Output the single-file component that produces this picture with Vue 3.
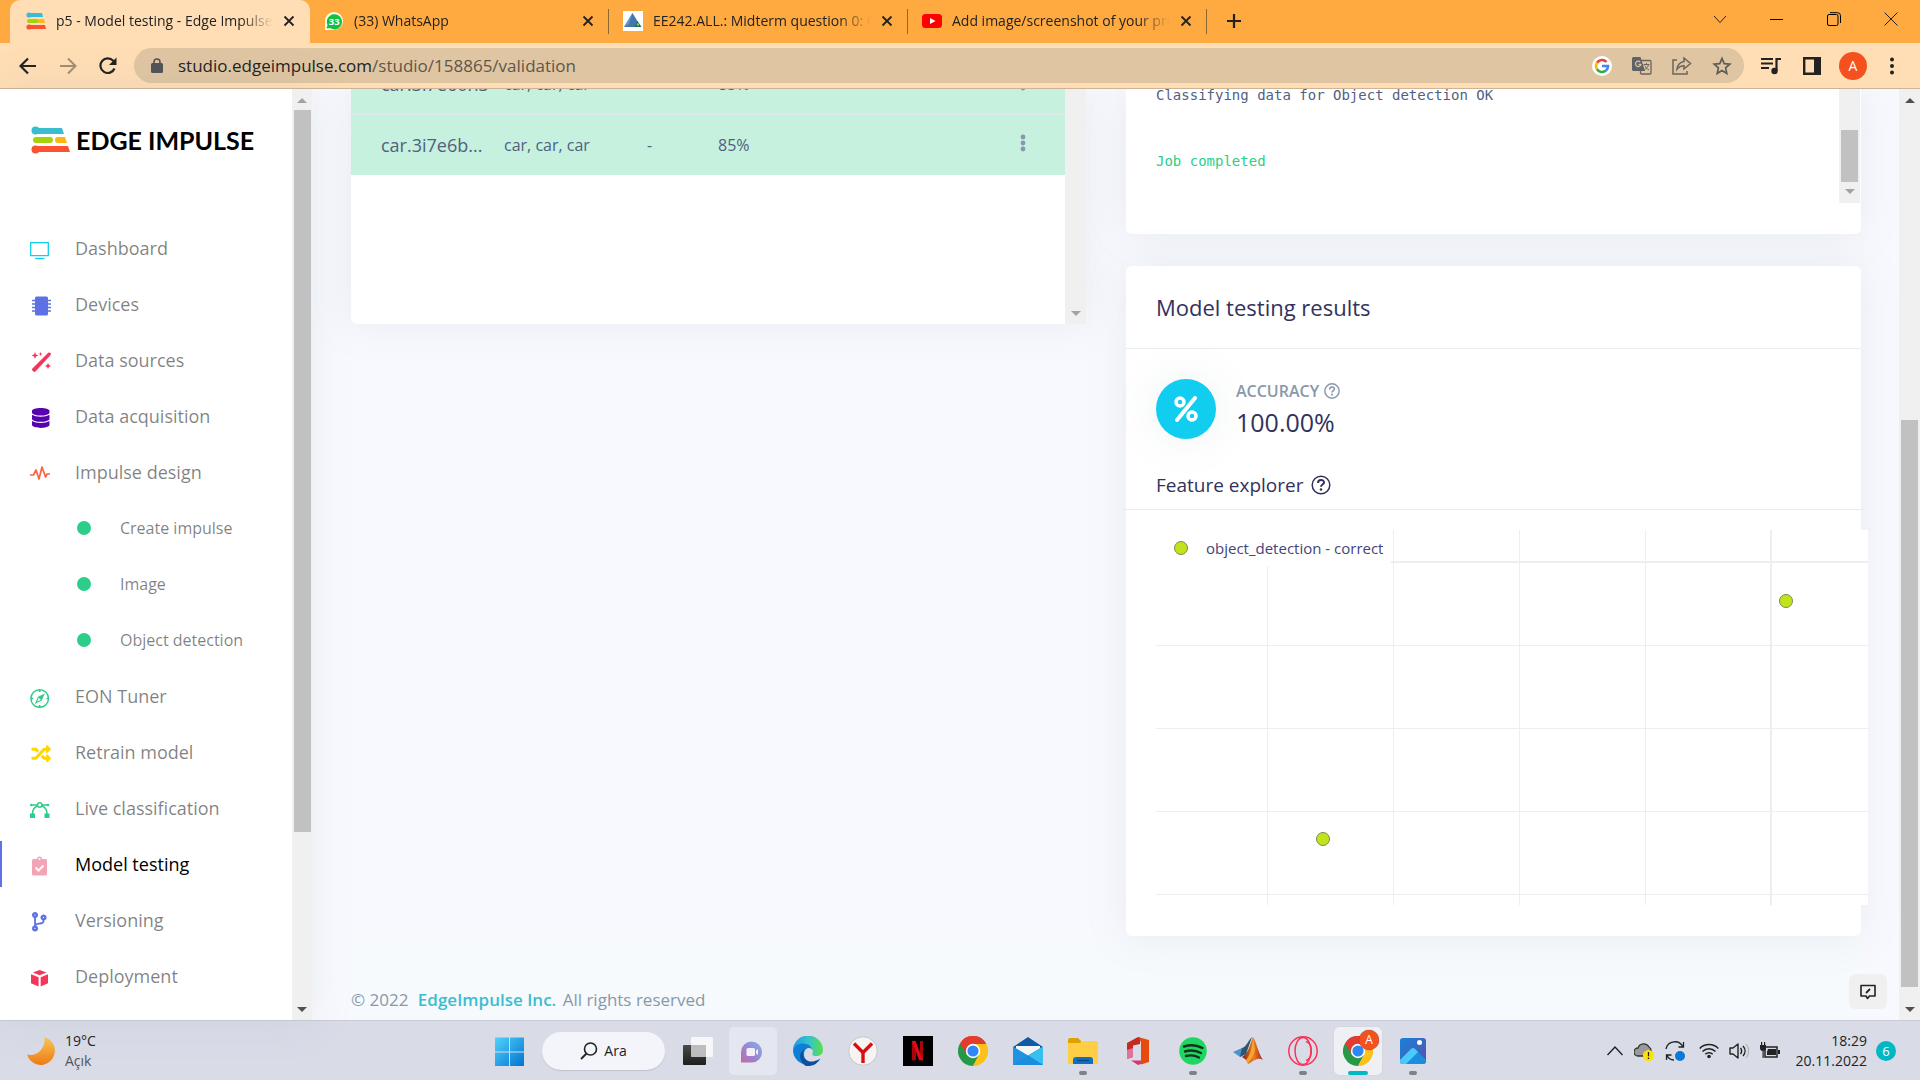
<script setup>
const stripes = `<path d="M3 2h13l1 4H3z" fill="#3bbdd0"/><circle cx="3" cy="4" r="2.6" fill="#3bbdd0"/><path d="M3 8h8a2 2 0 0 1 0 4H3a2 2 0 0 1 0-4z" fill="#a4d20b"/><path d="M14 8h4l1 4h-5a2 2 0 0 1 0-4z" fill="#fdb614"/><path d="M3 14h16l1 4H3z" fill="#fb5330"/><circle cx="3" cy="16" r="2.6" fill="#fb5330"/>`

const tabs = [
  { title: 'p5 - Model testing - Edge Impulse', active: true, icon: stripes },
  { title: '(33) WhatsApp', icon: `<path d="M1 19V10a9 9 0 1 1 9 9z" fill="#f3ffe9"/><path d="M2.500 17.500l1-3.500A7.600 7.600 0 1 1 6 17z" fill="#10c143"/><text x="10.200" y="13.600" font-size="9.500" font-weight="700" text-anchor="middle" fill="#fff" font-family="Open Sans, sans-serif">33</text>` },
  { title: 'EE242.ALL.: Midterm question 0: Quiz', icon: `<path d="M0 0h20v20H0z" fill="#fff"/><path d="M9.500 2l8.500 14H1z" fill="#4478ad"/><path d="M9.500 2L1 16l5-3z" fill="#5f9acb"/><path d="M14.500 10l4 6h-7z" fill="#16725f"/><circle cx="15" cy="13.500" r="1.200" fill="#8bd24a"/>` },
  { title: 'Add image/screenshot of your project', icon: `<rect y="3" width="20" height="14" rx="3.500" fill="#f00"/><path d="M8 7v6l5.500-3z" fill="#fff"/>` }
]

const wave = '<path d="M0 11h3.500l2.500-5 3 9L12 3l3.500 10 1.500-3h3" fill="none" stroke="#fb6340" stroke-width="1.700" stroke-linejoin="round"/>'
const nav = [
  { label: 'Dashboard', icon: '<g fill="none" stroke="#11cdef" stroke-width="1.300"><path d="M.700 2.700h17.600v13H.700z"/><path d="M5 18.500h9.500"/></g>' },
  { label: 'Devices', icon: '<rect x="5" y=".500" width="13" height="19" rx="1.500" fill="#5e72e4"/><path d="M2 4.500h19M2 8h19M2 11.500h19M2 15h19" stroke="#5e72e4" stroke-width="1.500"/>' },
  { label: 'Data sources', icon: '<path d="M3.500 19.500l-1.300-1.300a1 1 0 0 1 0-1.400L18.500.500 21 1 20.500 3.300 5.500 19.500a1.400 1.400 0 0 1-2 0z" fill="#f5365c"/><path d="M5 0l1 2.500 2.500 1-2.500 1L5 7 4 4.500l-2.500-1L4 2.500zM10.500 0l.600 1.400 1.400.600-1.400.600-.600 1.400-.600-1.400L8.500 2l1.400-.600zM18 11l1 2 2 1-2 1-1 2-1-2-2-1 2-1z" fill="#f5365c"/>' },
  { label: 'Data acquisition', icon: '<path transform="translate(2 0) scale(.039)" d="M448 73.143v45.714C448 159.143 347.667 192 224 192S0 159.143 0 118.857V73.143C0 32.857 100.333 0 224 0s224 32.857 224 73.143zM448 176v102.857C448 319.143 347.667 352 224 352S0 319.143 0 278.857V176c48.125 33.143 136.208 48.572 224 48.572S399.874 209.143 448 176zm0 160v102.857C448 479.143 347.667 512 224 512S0 479.143 0 438.857V336c48.125 33.143 136.208 48.572 224 48.572S399.874 369.143 448 336z" fill="#5603ad"/>' },
  { label: 'Impulse design', icon: wave },
  { label: 'Create impulse', sub: true },
  { label: 'Image', sub: true },
  { label: 'Object detection', sub: true },
  { label: 'EON Tuner', icon: '<circle cx="9.700" cy="10.500" r="8.800" fill="none" stroke="#2dce89" stroke-width="1.500"/><path d="M9.700 2v2M9.700 17v2M1 10.500h2M16.500 10.500h2" stroke="#2dce89" stroke-width="1.500"/><path d="M14.800 5.500l-3 7-7 3.500 3.200-7.200zM8.700 9.700l-1.500 4 3.700-2z" fill="#2dce89" fill-rule="evenodd"/>' },
  { label: 'Retrain model', icon: '<path transform="translate(1.500 0) scale(.038)" d="M504.971 359.029c9.373 9.373 9.373 24.569 0 33.941l-80 79.984c-15.010 15.010-40.971 4.490-40.971-16.971V416h-58.785a12.004 12.004 0 0 1-8.773-3.812l-70.556-75.596 53.333-57.143L352 336h32v-39.981c0-21.438 25.943-31.998 40.971-16.971l80 79.981zM12 176h84l52.781 56.551 53.333-57.143-70.556-75.596A11.999 11.999 0 0 0 122.785 96H12c-6.627 0-12 5.373-12 12v56c0 6.627 5.373 12 12 12zm372 0v39.984c0 21.460 25.961 31.980 40.971 16.971l80-79.984c9.373-9.373 9.373-24.569 0-33.941l-80-79.981C409.943 24.021 384 34.582 384 56.019V96h-58.785a12.004 12.004 0 0 0-8.773 3.812L96 336H12c-6.627 0-12 5.373-12 12v56c0 6.627 5.373 12 12 12h110.785c3.326 0 6.503-1.381 8.773-3.812L352 176h32z" fill="#ffd600"/>' },
  { label: 'Live classification', icon: '<g fill="none" stroke="#2dce89" stroke-width="1.500"><circle cx="9.700" cy="5" r="2.200"/><path d="M7.500 5H1.500M12 5h6M2.500 14c0-4 2-7 5.200-8M17 14c0-4-2-7-5.200-8"/></g><path d="M0 13.500h5v4.500H0zM14.500 13.500h5v4.500h-5z" fill="#2dce89"/><circle cx="1.300" cy="5" r="1.300" fill="#2dce89"/><circle cx="18" cy="5" r="1.300" fill="#2dce89"/>' },
  { label: 'Model testing', active: true, icon: '<path d="M3.500 3H7a2.500 2.500 0 0 1 5 0h3.500A1.500 1.500 0 0 1 17 4.500V18a1.500 1.500 0 0 1-1.500 1.500h-12A1.500 1.500 0 0 1 2 18V4.500A1.500 1.500 0 0 1 3.500 3z" fill="#f3a4b5"/><circle cx="9.500" cy="3" r="1" fill="#fff"/><path d="M5.500 11.500l3 3 5-5" fill="none" stroke="#fff" stroke-width="2"/>' },
  { label: 'Versioning', icon: '<path transform="translate(2 0) scale(.038)" d="M384 144c0-44.200-35.800-80-80-80s-80 35.800-80 80c0 36.400 24.300 67.100 57.500 76.800-.6 16.100-4.200 28.500-11 36.900-15.400 19.200-49.300 22.400-85.200 25.700-28.200 2.600-57.400 5.400-81.300 16.900v-144c32.500-10.200 56-40.500 56-76.300 0-44.200-35.800-80-80-80S0 35.800 0 80c0 35.800 23.500 66.100 56 76.300v199.300C23.500 365.900 0 396.200 0 432c0 44.200 35.800 80 80 80s80-35.800 80-80c0-34-21.200-63.100-51.200-74.600 3.100-5.200 7.800-9.800 14.900-13.400 16.200-8.200 40.400-10.400 66.100-12.800 42.200-3.900 90-8.400 118.200-43.400 14-17.400 21.100-39.800 21.600-67.900 31.600-10.800 54.400-40.700 54.400-75.900zM80 64c8.800 0 16 7.200 16 16s-7.200 16-16 16-16-7.200-16-16 7.200-16 16-16zm0 384c-8.800 0-16-7.200-16-16s7.200-16 16-16 16 7.200 16 16-7.200 16-16 16zm224-320c8.800 0 16 7.200 16 16s-7.200 16-16 16-16-7.200-16-16 7.200-16 16-16z" fill="#5e72e4"/>' },
  { label: 'Deployment', icon: '<path d="M9.700 2l6.800 2.600-6.800 2.700-6.800-2.700zM1 6.300l7.600 2.900v9.300L1 15.300zM18 6.300l-7.300 2.900v9.300L18 15.300z" fill="#f5365c"/>' }
]

const chrome = '<path d="M15 15L2 7.500A15 15 0 0 1 28 7.500z" fill="#e33b2e"/><path d="M15 15h13V7.500A15 15 0 0 1 15 30z" fill="#fcc21b"/><path d="M15 15l6.500 3.700L15 30A15 15 0 0 1 2 7.500z" fill="#279847"/><path d="M15 8h13.200A15 15 0 0 0 2 7.500L9 18.700z" fill="#e33b2e"/><path d="M15 8h13.200A15 15 0 0 1 15 30l6-11.500z" fill="#fcc21b"/><circle cx="15" cy="15" r="7.200" fill="#fff"/><circle cx="15" cy="15" r="5.600" fill="#3086f3"/>'
const apps = [
  { name: 'Task View', icon: '<defs><linearGradient id="tv" x2="0" y2="1"><stop stop-color="#4a4a48"/><stop offset="1" stop-color="#1e1e1c"/></linearGradient></defs><rect y="9" width="23" height="20" rx="1" fill="url(#tv)"/><rect x="8" y="1" width="22" height="20" rx="1" fill="#fff" fill-opacity=".78"/><path d="M8 9h15v12H8z" fill="#aaa" fill-opacity=".55"/>' },
  { name: 'Chat', lit: true, icon: '<defs><linearGradient id="ch" x1="1" x2="0" y2="1"><stop stop-color="#7fb4ec"/><stop offset=".550" stop-color="#9b84cf"/><stop offset="1" stop-color="#c06ba6"/></linearGradient></defs><path d="M3 26.500V16A10.500 10.500 0 1 1 14 26.500z" fill="url(#ch)"/><rect x="8.500" y="12" width="8.500" height="8" rx="1.500" fill="#f3effa"/><path d="M18 14.500l2-1.500v6l-2-1.500z" fill="#f3effa"/>' },
  { name: 'Edge', icon: '<defs><linearGradient id="eg" x2="1"><stop stop-color="#1b9de2"/><stop offset=".500" stop-color="#35c1d0"/><stop offset="1" stop-color="#5be048"/></linearGradient></defs><path d="M0 15A15 15 0 0 1 30 14c0 4-3 6-7 6-3 0-4-1-3.500-2.500C21 15 18 9 11 9 5 9 1 12 0 15z" fill="url(#eg)"/><path d="M0 15c1-5 5-7.500 10-7.500 6 0 9 4 9 6-3-3-8-1-8 5 0 5 5 9 11 8A14.500 14.500 0 0 1 0 15z" fill="#0f7ed5"/><path d="M12 13c-2 2-3 6 0 10 3 3 8 4 15.500-.500A15 15 0 0 1 13 30C7 27 4 17 12 13z" fill="#0d4f9e"/>' },
  { name: 'Yandex', icon: '<circle cx="15" cy="15" r="14.300" fill="#f5f4f2" stroke="#c6c5c8"/><path d="M6 7.500l9 9 9-9M15 15v12" fill="none" stroke="#d80f12" stroke-width="3.400"/>' },
  { name: 'Netflix', icon: '<path d="M0 0h30v30H0z"/><path d="M9 5h4v19l-4 .600zM17 5h3v19.600l-3-.600z" fill="#a9050f"/><path d="M9 5h3.500L20 24.600l-4-.600z" fill="#e50914"/>' },
  { name: 'Chrome', icon: chrome },
  { name: 'Mail', icon: '<path d="M0 11L15 1l15 10v7H0z" fill="#0f5ba6"/><path d="M3 10h24v8L15 22 3 18z" fill="#f4f5f8"/><path d="M0 10.500l15 9 15-9V29H0z" fill="#1f93e0"/><path d="M15 19.500l15-9V29z" fill="#36c0f0"/><path d="M0 29l15-9.500L30 29z" fill="#1a8ddd"/>' },
  { name: 'File Explorer', running: true, icon: '<path d="M0 4a2 2 0 0 1 2-2h8l3 3v6H0z" fill="#e0a100"/><path d="M0 7h12l3-2h13a2 2 0 0 1 2 2v20a1 1 0 0 1-1 1H1a1 1 0 0 1-1-1z" fill="#ffce45"/><path d="M5 28v-4a3 3 0 0 1 3-3h14a3 3 0 0 1 3 3v4z" fill="#1070c4"/><path d="M9 24.500h12" stroke="#0b4a8b" stroke-width="1.500"/>' },
  { name: 'Office', icon: '<path d="M4 7l11-6 2 .500V8L10 9.500V21l-6 2z" fill="#c22a22"/><path d="M4 14l6-2v9l-6 2z" fill="#e2729a"/><path d="M15 1l11 3v22l-8 2.500V6z" fill="#e64a0f"/><path d="M8 24.500h10V28l-3 1z" fill="#d5386a"/>' },
  { name: 'Spotify', running: true, icon: '<circle cx="15" cy="15" r="13.800" fill="#1ed760"/><path d="M6 10.500c6-2 13-1.500 18.500 1.500M7 15.500c5-1.500 11-1 16 1.500M8 20c4.500-1.200 9-.700 13 1.500" fill="none" stroke="#13301d" stroke-width="2.400" stroke-linecap="round"/>' },
  { name: 'MATLAB', icon: '<defs><linearGradient id="ml" x2="1"><stop stop-color="#7b1f1a"/><stop offset=".550" stop-color="#ef7d22"/><stop offset="1" stop-color="#a3251a"/></linearGradient></defs><path d="M0 16l9-4 5 4-7 5z" fill="#4c94cf"/><path d="M9 12c4-1 6-7 10-11l-6 17-6 3z" fill="#2f5570"/><path d="M20 1c3 4 6 18 10 23-5-3-8 0-15 4 0-3-3-5-6-7 6-3 8-12 11-20z" fill="url(#ml)"/><path d="M13 24c4-4 6-12 7-23l2 13c-2 7-4 10-7 14z" fill="#f6a52b"/>' },
  { name: 'Opera', running: true, icon: '<g fill="none" stroke="#fa3257" stroke-width="1.500"><circle cx="15" cy="15" r="14.200"/><ellipse cx="15" cy="15" rx="8" ry="13.500"/><path d="M18 5.500c7 2 7 17 0 19"/></g>' },
  { name: 'Chrome – A', running: true, active: true, icon: chrome },
  { name: 'Photos', running: true, icon: '<defs><linearGradient id="ph" x1="0" x2="1" y2="1"><stop stop-color="#1683d8"/><stop offset="1" stop-color="#5a4fb0"/></linearGradient></defs><rect x="2" y="2" width="26" height="26" rx="3" fill="url(#ph)"/><path d="M2 24l11-11a3 3 0 0 1 4 0l11 11v1a3 3 0 0 1-3 3H5a3 3 0 0 1-3-3z" fill="#1a8fe0"/><path d="M2 24l11-11a3 3 0 0 1 4 0l3 3L8 28H5a3 3 0 0 1-3-3z" fill="#4cc9fb"/><circle cx="21.500" cy="6.500" r="2.500" fill="#fff"/>' }
]

const rows = [
  { name: 'car.3i7e60n3', labels: 'car, car, car', anomaly: '-', score: '85%' },
  { name: 'car.3i7e6b...', labels: 'car, car, car', anomaly: '-', score: '85%' }
]
const points = [{ x: 630, y: 71 }, { x: 167, y: 309 }]
const gridX = [111, 237, 363, 489]
const gridY = [115, 198, 281, 364]
</script>

<template>
  <div class="screen">
    <header class="browser">
      <div class="tabstrip">
        <div class="tabs">
          <div v-for="t in tabs" :key="t.title" class="tab" :class="{ active: t.active }">
            <svg class="favicon" viewBox="0 0 20 20" v-html="t.icon"></svg>
            <span class="tab-title">{{ t.title }}</span>
            <button class="plain" aria-label="Close tab">
              <svg width="12" height="12" viewBox="0 0 12 12"><path d="M1.500 1.500l9 9M10.500 1.500l-9 9" stroke="#222" stroke-width="1.800" /></svg>
            </button>
          </div>
          <button class="plain new-tab" aria-label="New tab">
            <svg width="16" height="16" viewBox="0 0 16 16"><path d="M8 1v14M1 8h14" stroke="#222" stroke-width="2.200" /></svg>
          </button>
        </div>
        <div class="window-buttons">
          <button class="plain" aria-label="Search tabs"><svg width="14" height="14" viewBox="0 0 14 14"><path d="M1 4l6 6.500L13 4" fill="none" stroke="#222" /></svg></button>
          <button class="plain" aria-label="Minimize"><svg width="14" height="14" viewBox="0 0 14 14"><path d="M0 7.500h13" stroke="#000" /></svg></button>
          <button class="plain" aria-label="Restore"><svg width="14" height="14" viewBox="0 0 14 14"><g fill="none" stroke="#000"><rect x=".500" y="2.500" width="10.500" height="11" rx="1.500" /><path d="M3 .700h7.500a3 3 0 0 1 3 3V11" /></g></svg></button>
          <button class="plain" aria-label="Close window"><svg width="14" height="14" viewBox="0 0 14 14"><path d="M.500.500l13 13M13.500.500l-13 13" stroke="#222" /></svg></button>
        </div>
      </div>
      <div class="toolbar">
        <button class="plain" aria-label="Back"><svg width="18" height="18" viewBox="0 0 18 18"><path d="M17 9H2M9 1.500L1.500 9 9 16.500" fill="none" stroke="#222" stroke-width="2.200" /></svg></button>
        <button class="plain" aria-label="Forward"><svg width="18" height="18" viewBox="0 0 18 18"><path d="M1 9h15M9 1.500L16.500 9 9 16.500" fill="none" stroke="#a28c74" stroke-width="2" /></svg></button>
        <button class="plain" aria-label="Reload"><svg width="18" height="18" viewBox="0 0 18 18"><path d="M15.500 11.500a7.300 7.300 0 1 1-1.300-7.700l2 2" fill="none" stroke="#222" stroke-width="2.200" /><path d="M17.500.500V8H10z" fill="#222" /></svg></button>
        <div class="omnibox">
          <svg width="12" height="16" viewBox="0 0 12 16"><rect y="5" width="12" height="10" rx="1.500" fill="#505256" /><path d="M3 6V4a3 3 0 0 1 6 0v2" fill="none" stroke="#505256" stroke-width="1.600" /></svg>
          <a class="url" href="#"><span>studio.edgeimpulse.com</span>/studio/158865/validation</a>
          <button class="plain" aria-label="Google Lens"><svg width="20" height="20" viewBox="0 0 20 20"><circle cx="10" cy="10" r="10" fill="#fff" /><g fill="none" stroke-width="2.600"><path d="M14.500 6A6 6 0 0 0 5 6.800" stroke="#ea4335" /><path d="M5 6.800a6 6 0 0 0 0 6.400" stroke="#fbbc05" /><path d="M5 13.200a6 6 0 0 0 9 1.300" stroke="#34a853" /><path d="M14 14.500A6 6 0 0 0 16 10h-6" stroke="#4285f4" /></g></svg></button>
          <button class="plain" aria-label="Translate"><svg width="20" height="20" viewBox="0 0 20 20"><rect x="8.500" y="4.500" width="10.500" height="13.500" rx="1" fill="none" stroke="#6b655e" stroke-width="1.300" /><path d="M1.500 1h7l4.500 14H1.500A1.500 1.500 0 0 1 0 13.500v-11A1.500 1.500 0 0 1 1.500 1z" fill="#5f6368" /><path d="M8.200 6a2.700 2.700 0 1 0 .700 2.300H6.500" fill="none" stroke="#e0c5a1" stroke-width="1.200" /><path d="M11.500 8.500h6M14.500 7v1.500M16.500 8.500c-.500 2.500-2 4-4 5M13 9.500c.500 1.500 2 3.500 4 4.500" fill="none" stroke="#6b655e" /></svg></button>
          <button class="plain" aria-label="Share"><svg width="20" height="20" viewBox="0 0 20 20"><path d="M5 4H1v14h14v-3M12 2l6.500 5.500L12 13V9.700c-3 0-5 1-7 3.500.500-4 3-7 7-7.700z" fill="none" stroke="#6b655e" stroke-width="1.500" /></svg></button>
          <button class="plain" aria-label="Bookmark"><svg width="20" height="20" viewBox="0 0 20 20"><path d="M10 2.500l2.200 5.200 5.600.500-4.200 3.700 1.200 5.500L10 14.500l-4.800 2.900 1.200-5.500-4.200-3.700 5.600-.500z" fill="none" stroke="#5f5c58" stroke-width="1.700" /></svg></button>
        </div>
        <button class="plain" aria-label="Media"><svg width="20" height="20" viewBox="0 0 20 20"><path d="M0 3h12M0 7.500h12M0 12h8M15.500 15V3H20" fill="none" stroke="#222" stroke-width="2.200" /><circle cx="13.500" cy="15" r="3.200" fill="#222" /></svg></button>
        <button class="plain" aria-label="Side panel"><svg width="18" height="18" viewBox="0 0 18 18"><path d="M1.200 1.200h15.600v15.600H1.200z" fill="none" stroke="#222" stroke-width="2.400" /><path d="M11 1h6v16h-6z" fill="#222" /></svg></button>
        <button class="plain profile" aria-label="Profile">A</button>
        <button class="plain" aria-label="Menu"><svg width="6" height="18" viewBox="0 0 6 18"><g fill="#222"><circle cx="3" cy="2.500" r="2" /><circle cx="3" cy="9" r="2" /><circle cx="3" cy="15.500" r="2" /></g></svg></button>
      </div>
    </header>

    <div class="page">
      <aside class="sidebar">
        <div class="side-content">
          <a class="brand" href="#">
            <svg width="39" height="28" viewBox="0 0 39 28"><path d="M5 2h26l2 6H5z" fill="#3bbdd0" /><circle cx="4.500" cy="4.500" r="4" fill="#3bbdd0" /><rect x="2" y="11" width="20" height="6" rx="3" fill="#a4d20b" /><path d="M27 11h7l2 6h-9a3 3 0 0 1 0-6z" fill="#fdb614" /><path d="M5 20h32l2 6H5z" fill="#fb5330" /><circle cx="4.500" cy="23.500" r="4" fill="#fb5330" /></svg>
            <span>EDGE IMPULSE</span>
          </a>
          <nav>
            <a v-for="n in nav" :key="n.label" href="#" :class="{ sub: n.sub, current: n.active }">
              <i v-if="n.sub" class="dot"></i>
              <svg v-else width="22" height="20" viewBox="0 0 22 20" v-html="n.icon"></svg>
              <span>{{ n.label }}</span>
            </a>
          </nav>
        </div>
        <div class="scroll side-scroll"><i class="arrow up grey"></i><i class="thumb"></i><i class="arrow down"></i></div>
      </aside>

      <main>
        <div class="columns">
          <section class="card samples">
            <div class="table-wrap">
              <table>
                <tbody>
                  <tr v-for="r in rows" :key="r.name">
                    <td class="name">{{ r.name }}</td>
                    <td class="labels">{{ r.labels }}</td>
                    <td class="anomaly">{{ r.anomaly }}</td>
                    <td>{{ r.score }}</td>
                    <td class="more">
                      <button class="plain" aria-label="Sample options"><svg width="8" height="18" viewBox="0 0 8 18"><g fill="#8898aa"><circle cx="4" cy="3" r="2.400" /><circle cx="4" cy="9" r="2.400" /><circle cx="4" cy="15" r="2.400" /></g></svg></button>
                    </td>
                  </tr>
                </tbody>
              </table>
            </div>
            <div class="scroll"><i class="arrow down grey"></i></div>
          </section>

          <div class="right">
            <section class="card job">
              <pre>Classifying data for Object detection OK


<b>Job completed</b></pre>
              <div class="scroll job-scroll"><i class="thumb"></i><i class="arrow down grey"></i></div>
            </section>

            <section class="card results">
              <h2>Model testing results</h2>
              <div class="body">
                <div class="accuracy">
                  <span class="percent"><svg width="24" height="26" viewBox="0 0 24 26"><g fill="none" stroke="#fff" stroke-width="3.500"><circle cx="6" cy="6" r="4" /><circle cx="18" cy="20" r="4" /><path d="M21 2L3 24" stroke-width="4" stroke-linecap="round" /></g></svg></span>
                  <div>
                    <div class="metric">ACCURACY <button class="plain help" aria-label="About accuracy"><svg width="16" height="16" viewBox="0 0 20 20"><circle cx="10" cy="10" r="9" fill="none" stroke="currentColor" stroke-width="1.800" /><path d="M7 8c0-4 6-4 6-.500 0 2-3 2-3 4.300" fill="none" stroke="currentColor" stroke-width="2" /><circle cx="10" cy="14.500" r="1.300" fill="currentColor" /></svg></button></div>
                    <div class="value">100.00%</div>
                  </div>
                </div>
                <h3>Feature explorer <button class="plain help" aria-label="About feature explorer"><svg width="20" height="20" viewBox="0 0 20 20"><circle cx="10" cy="10" r="8.800" fill="none" stroke="currentColor" stroke-width="1.500" /><path d="M7 8c0-4 6-4 6-.500 0 2-3 2-3 4.300" fill="none" stroke="currentColor" stroke-width="2" /><circle cx="10" cy="14.500" r="1.300" fill="currentColor" /></svg></button></h3>
                <hr>
                <div class="plot">
                  <svg viewBox="0 0 712 375">
                    <path d="M0 0h712v375H0z" fill="#fff" />
                    <g fill="#eee">
                      <rect v-for="x in gridX" :key="'x' + x" :x="x" y="0" width="1" height="375" />
                      <rect v-for="y in gridY" :key="'y' + y" x="0" :y="y" width="712" height="1" />
                      <rect x="614" y="0" width="2" height="375" />
                      <rect x="0" y="31" width="712" height="2" />
                    </g>
                    <circle v-for="p in points" :key="p.x" :cx="p.x" :cy="p.y" r="6.500" fill="#c0e31a" stroke="#7c8a52" />
                  </svg>
                  <div class="legend">
                    <svg width="14" height="14" viewBox="0 0 14 14"><circle cx="7" cy="7" r="6.500" fill="#c0e31a" stroke="#7c8a52" /></svg>
                    <span>object_detection - correct</span>
                  </div>
                </div>
              </div>
            </section>
          </div>
        </div>
        <footer>© 2022 <a href="#">EdgeImpulse Inc.</a> All rights reserved</footer>
        <button class="plain feedback" aria-label="Feedback"><svg width="16" height="16" viewBox="0 0 16 16"><path d="M1 1.500h14v10.500H9.500L7.500 14.500 6 12H1z" fill="none" stroke="#222" stroke-width="1.600" stroke-linejoin="round" /><path d="M6 9l4-4" stroke="#222" stroke-width="1.800" /></svg></button>
      </main>
      <div class="scroll page-scroll"><i class="arrow up"></i><i class="thumb"></i><i class="arrow down"></i></div>
    </div>

    <footer class="taskbar">
      <button class="plain weather">
        <svg width="30" height="30" viewBox="0 0 30 30"><defs><linearGradient id="moon" x2="0" y2="1"><stop stop-color="#f8c84e" /><stop offset="1" stop-color="#ef7a1a" /></linearGradient></defs><path d="M18.500 1A14.200 14.200 0 1 1 1 18.500C11 21 20 12 18.500 1z" fill="url(#moon)" /></svg>
        <span>19°C<br><small>Açık</small></span>
      </button>
      <div class="apps">
        <button class="plain app" aria-label="Start"><svg width="30" height="30" viewBox="0 0 30 30"><defs><linearGradient id="win" x2="1" y2="1"><stop stop-color="#4fd3fd" /><stop offset="1" stop-color="#0272cf" /></linearGradient></defs><path d="M0 1.500h14v14H0zM15 1.500h14v14H15zM0 16.500h14v14H0zM15 16.500h14v14H15z" fill="url(#win)" /></svg></button>
        <button class="plain search"><svg width="18" height="18" viewBox="0 0 18 18"><circle cx="10.500" cy="7" r="6" fill="none" stroke="#222" stroke-width="1.600" /><path d="M6.500 11.500l-5.500 5.500" stroke="#222" stroke-width="1.800" /></svg>Ara</button>
        <button v-for="a in apps" :key="a.name" class="plain app" :class="{ lit: a.lit, active: a.active, running: a.running }" :aria-label="a.name">
          <svg width="30" height="30" viewBox="0 0 30 30" v-html="a.icon"></svg>
          <span v-if="a.active" class="badge">A</span>
        </button>
      </div>
      <div class="tray">
        <svg width="16" height="20" viewBox="0 0 16 20"><path d="M.500 14L8 6l7.500 8" fill="none" stroke="#222" stroke-width="1.400" /></svg>
        <svg width="20" height="20" viewBox="0 0 20 20"><path d="M4 15a4 4 0 0 1 0-8 6 6 0 0 1 11-1 4 4 0 0 1 2 4l-3 5z" fill="#9a9a9c" stroke="#333" stroke-width="1.300" /><circle cx="14.500" cy="14.500" r="5.500" fill="#fbe200" /><path d="M14.500 11v4.300M14.500 16.500v1.500" stroke="#222" stroke-width="1.300" /></svg>
        <svg width="20" height="20" viewBox="0 0 20 20"><path d="M1 8a9 9 0 0 1 17-2M18.500 1v5h-5M9 19c-3 0-6-2-7-5M1.500 19v-5h5" fill="none" stroke="#222" stroke-width="1.300" /><circle cx="15" cy="15" r="5" fill="#0a78d8" /></svg>
        <svg class="wifi" width="20" height="16" viewBox="0 0 20 16"><g fill="none" stroke="#222" stroke-width="1.500"><path d="M.700 5.500a13 13 0 0 1 18.600 0M3.500 8.500a9 9 0 0 1 13 0M6.300 11.300a5 5 0 0 1 7.400 0" /></g><circle cx="10" cy="13.500" r="1.800" fill="#222" /></svg>
        <svg width="20" height="18" viewBox="0 0 20 18"><path d="M1 6h3l5-4v14l-5-4H1z" fill="none" stroke="#222" stroke-width="1.400" stroke-linejoin="round" /><path d="M11.500 6c1.500 2 1.500 4 0 6M14 4c2.700 3 2.700 7 0 10" fill="none" stroke="#222" stroke-width="1.400" /><path d="M17 2c3.500 4 3.500 10 0 14" fill="none" stroke="#aaa" /></svg>
        <svg width="20" height="18" viewBox="0 0 20 18"><path d="M5 5h12v10H5z" fill="none" stroke="#222" stroke-width="1.500" /><path d="M8 7h8v6H7v-3zM18 8h2v4h-2zM0 3h6v3a3 3 0 0 1-6 0zM1 0h1.200v3H1zM4 0h1.200v3H4zM2.500 8h1.200v8H2.500z" fill="#222" /></svg>
        <div class="clock">18:29<br>20.11.2022</div>
        <span class="count">6</span>
      </div>
    </footer>
  </div>
</template>

<style>
body { margin: 0; }
</style>

<style scoped>
* { box-sizing: border-box; }
.screen { height: 100vh; display: flex; flex-direction: column; overflow: hidden; font-family: "Open Sans", "Noto Sans", sans-serif; color: #222; }
.plain { border: 0; padding: 0; margin: 0; background: none; color: inherit; font: inherit; display: inline-flex; align-items: center; justify-content: center; flex: none; }
a { text-decoration: none; color: inherit; }
svg { flex: none; display: block; }

.tabstrip { height: 43px; background: #ffaa40; display: flex; justify-content: space-between; padding-left: 10px; }
.tabs { display: flex; }
.tab { position: relative; width: 299px; display: flex; align-items: center; gap: 10px; padding: 0 15px 2px 14px; font-size: 14px; }
.tab.active { background: #ffdeb5; border-radius: 10px 10px 0 0; width: 300px; padding-left: 16px; }
.tab:not(.active)::after { content: ""; position: absolute; right: 0; top: 9px; width: 1px; height: 25px; background: #8a6733; }
.favicon { width: 20px; height: 20px; }
.tab-title { flex: 1; white-space: nowrap; overflow: hidden; mask-image: linear-gradient(90deg, #000 85%, transparent); }
.new-tab { width: 54px; padding-bottom: 2px; }
.window-buttons { display: flex; padding: 0 1px 6px 0; }
.window-buttons .plain { width: 57px; }
.toolbar { height: 46px; background: #ffdeb5; border-bottom: 1px solid #cdb397; display: flex; align-items: center; gap: 22px; padding: 0 25px 0 19px; }
.omnibox { flex: 1; height: 35px; border-radius: 18px; background: #dfc5a2; display: flex; align-items: center; gap: 20px; padding: 0 12px 0 17px; margin: 0 -5px 0 -5px; }
.url { flex: 1; font-size: 17px; color: #5f564b; margin-left: -5px; }
.url span { color: #222; }
.profile { width: 28px; height: 28px; border-radius: 50%; background: #f4511e; color: #fff; font-size: 14px; margin-left: -4px; }

.page { flex: 1; min-height: 0; display: flex; background: #f8f9fe; }
.sidebar { position: relative; z-index: 2; flex: none; width: 312px; display: flex; background: #fff; box-shadow: 0 0 40px rgba(136, 152, 170, .15); }
.side-content { flex: 1; overflow: hidden; }
.brand { display: flex; align-items: center; gap: 6px; margin: 37px 0 0 31px; height: 28px; font: 700 25px "Lato", sans-serif; color: #000; white-space: nowrap; }
nav { margin-top: 71px; display: flex; flex-direction: column; }
nav a { height: 46px; margin-bottom: 10px; padding-left: 30px; display: flex; align-items: center; gap: 23px; font-size: 18px; color: rgba(0, 0, 0, .5); }
nav svg { margin-top: 3px; }
nav .current { color: #000; padding-left: 28px; border-left: 2px solid #5e72e4; }
nav .sub { padding-left: 77px; gap: 29px; font-size: 16px; }
.dot { width: 14px; height: 14px; border-radius: 50%; background: #2dce89; }

.scroll { flex: none; width: 21px; background: #f0f0f0; display: flex; flex-direction: column; align-items: center; padding: 9px 0 8px; }
.thumb { width: 17px; background: #c1c1c1; }
.arrow { border: 5px solid transparent; width: 0; height: 0; flex: none; }
.up { border-top: 0; border-bottom-color: #505050; }
.down { border-bottom: 0; border-top-color: #505050; margin-top: auto; }
.up.grey { border-bottom-color: #a3a3a3; }
.down.grey { border-top-color: #a3a3a3; }
.side-scroll { width: 20px; }
.side-scroll .thumb { height: 79%; margin-top: 7px; flex: none; }
.page-scroll .thumb { flex: none; height: 62%; margin-top: auto; }
.page-scroll .down { margin-top: 20px; }

main { position: relative; flex: 1; min-width: 0; overflow: hidden; padding: 0 38px 0 39px; display: flex; flex-direction: column; justify-content: space-between; }
.columns { position: relative; z-index: 1; display: grid; grid-template-columns: 1fr 1fr; gap: 40px; align-items: start; }
.card { background: #fff; box-shadow: 0 0 40px rgba(136, 152, 170, .15); color: #525f7f; }
.samples { height: 235px; display: flex; border-radius: 0 0 6px 6px; }
.table-wrap { flex: 1; overflow: hidden; }
table { width: 100%; margin-top: -36px; border-collapse: separate; border-spacing: 0; table-layout: fixed; font-size: 16px; }
td { height: 61px; padding: 0; background: #c5f1de; border-top: 1px solid #e6e9ec; }
td.name { width: 153px; padding-left: 30px; font-size: 18px; font-weight: 500; }
.labels { width: 143px; }
.anomaly { width: 71px; }
.more { width: 46px; }
.right { display: flex; flex-direction: column; gap: 32px; }
.job { height: 145px; border-radius: 0 0 6px 6px; display: flex; justify-content: space-between; padding: 0 1px 31px 30px; }
pre { margin: -5px 0 0; font: 14px/22px "DejaVu Sans Mono", monospace; }
pre b { color: #2dce89; font-weight: 400; }
.job-scroll { padding-bottom: 9px; }
.job-scroll .thumb { height: 52px; margin-top: 32px; }
.results { border-radius: 6px; color: #32325d; }
h2 { margin: 0; height: 83px; padding: 0 30px; display: flex; align-items: center; border-bottom: 1px solid #e9ecef; font-size: 22px; font-weight: 500; }
.body { padding: 30px 30px 31px; }
.accuracy { display: flex; gap: 20px; height: 60px; }
.percent { width: 60px; height: 60px; border-radius: 50%; background: #11cdef; display: flex; align-items: center; justify-content: center; box-shadow: 0 0 40px rgba(136, 152, 170, .15); }
.metric { color: #8898aa; font-size: 16px; line-height: 24px; font-weight: 600; display: flex; gap: 5px; align-items: center; }
.value { font-size: 25px; line-height: 38px; font-weight: 500; }
h3 { margin: 30px 0 0; height: 32px; display: flex; align-items: center; gap: 7px; font-size: 19px; font-weight: 500; }
hr { border: 0; height: 1px; background: #e9ecef; margin: 8px -34px 20px; }
.plot { position: relative; margin-right: -37px; }
.legend { position: absolute; left: 0; top: 0; height: 36px; width: 235px; display: flex; gap: 18px; align-items: center; padding-left: 18px; background: #fff; font-size: 15px; white-space: nowrap; color: #444478; }
main > footer { height: 80px; padding-top: 40px; line-height: 40px; background: #f6fafd; font-size: 17px; color: #8898aa; }
main > footer a { color: #3bbdd0; font-weight: 600; margin: 0 2px 0 5px; }
.feedback { position: absolute; z-index: 2; right: 12px; bottom: 11px; width: 38px; height: 35px; border-radius: 6px; background: #f0f0f0; }

.taskbar { flex: none; height: 60px; background: #d9dce7; border-top: 1px solid #c8cbd5; display: grid; grid-template-columns: 1fr auto 1fr; align-items: center; font-size: 14px; line-height: 20px; }
.weather { justify-self: start; margin-left: 26px; gap: 9px; text-align: left; }
small { font-size: 14px; color: #555; }
.apps { display: flex; gap: 7px; align-items: center; margin-left: 3px; }
.app { position: relative; width: 48px; height: 48px; border-radius: 5px; }
.lit { background: #e4e7f0; }
.active.app { background: #eff0f4; box-shadow: 0 0 1px #b4b6bf; }
.running::after { content: ""; position: absolute; bottom: 0; width: 8px; height: 4px; border-radius: 2px; background: #808186; }
.active.running::after { width: 20px; background: #00b7c3; }
.search { width: 123px; height: 38px; border-radius: 19px; background: #f4f5fa; margin: 0 2px 0 1px; gap: 6px; box-shadow: 0 1px 1px #bfc2cc; }
.badge { position: absolute; top: 3px; right: 3px; width: 20px; height: 20px; border-radius: 50%; background: #f4511e; color: #fff; font-size: 12px; line-height: 20px; box-shadow: 0 0 1px #333; }
.tray { justify-self: end; display: flex; align-items: center; gap: 11px; margin-right: 24px; }
.wifi { margin: 0 -1px 0 3px; }
.clock { text-align: right; width: 76px; white-space: nowrap; }
.count { width: 20px; height: 20px; border-radius: 50%; background: #00b7c3; color: #fff; text-align: center; font-size: 13px; margin-left: -2px; }
</style>
